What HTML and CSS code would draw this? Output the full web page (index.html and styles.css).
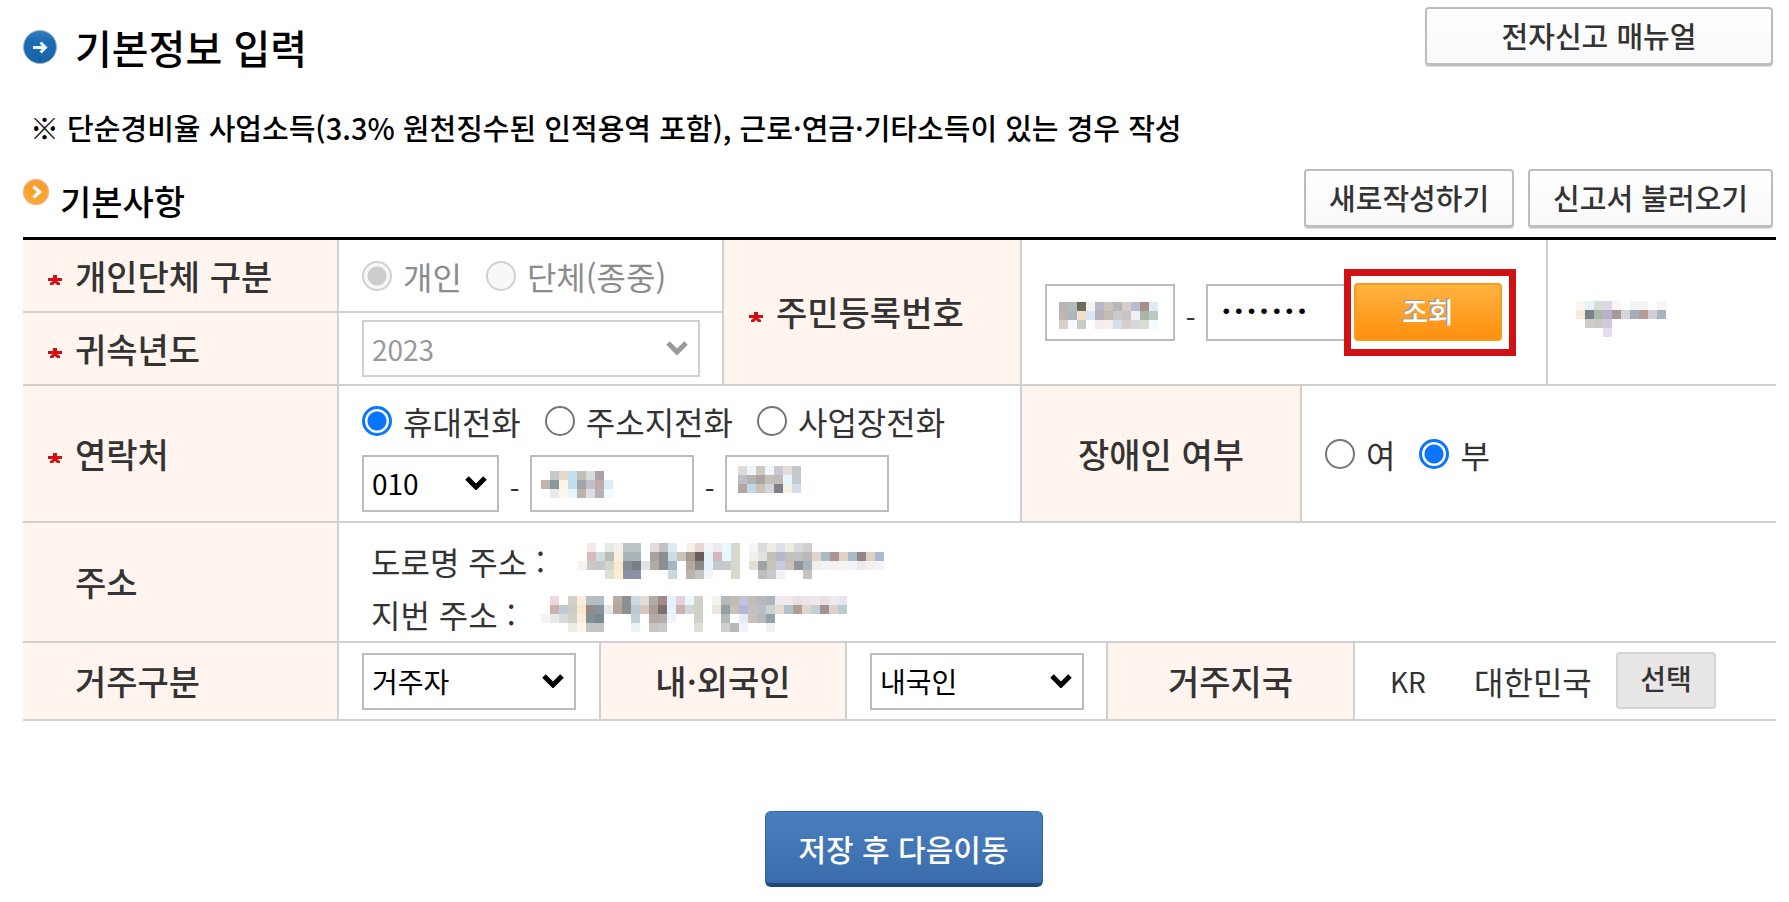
FILE: index.html
```html
<!DOCTYPE html>
<html lang="ko">
<head>
<meta charset="utf-8">
<title>기본정보 입력</title>
<link rel="stylesheet" href="styles.css">
</head>
<body>
<main class="page">
  <header class="page-head">
    <div class="title">
      <svg class="title-icon" viewBox="0 0 34 34" aria-hidden="true">
        <defs><linearGradient id="blue" x1="0" y1="0" x2="0" y2="1"><stop offset="0" stop-color="#3a7fbd"/><stop offset=".3" stop-color="#1c6cb2"/><stop offset="1" stop-color="#1a62a4"/></linearGradient></defs>
        <circle cx="17" cy="17" r="16.5" fill="url(#blue)" stroke="#8fb3d2"/>
        <path d="M10 17.500h12M17.500 12.500l5 5-5 5" fill="none" stroke="#e8f6ff" stroke-width="3"/>
      </svg>
      <h1>기본정보 입력</h1>
    </div>
    <button type="button" class="btn btn-manual">전자신고 매뉴얼</button>
  </header>

  <p class="note">※ 단순경비율 사업소득(3.3% 원천징수된 인적용역 포함), 근로·연금·기타소득이 있는 경우 작성</p>

  <div class="section-head">
    <div class="section-title">
      <svg class="section-icon" viewBox="0 0 26 26" aria-hidden="true">
        <defs><linearGradient id="orange" x1="0" y1="0" x2="0" y2="1"><stop offset="0" stop-color="#f49a2c"/><stop offset="1" stop-color="#f9ab2e"/></linearGradient></defs>
        <circle cx="13" cy="13" r="12" fill="url(#orange)" stroke="#f5a85c" stroke-width="2"/>
        <path d="M10.500 7.500l6 5.500-6 5.500" fill="none" stroke="#fff" stroke-width="3.400"/>
      </svg>
      <h2>기본사항</h2>
    </div>
    <div class="section-actions">
      <button type="button" class="btn">새로작성하기</button>
      <button type="button" class="btn">신고서 불러오기</button>
    </div>
  </div>

  <form>
    <table class="form-table">
      <colgroup>
        <col class="c1"><col class="c2"><col class="c3"><col class="c4"><col class="c5"><col class="c6"><col class="c7"><col class="c8"><col class="c9"><col class="c10">
      </colgroup>
      <tbody>
        <tr class="row-short">
          <th scope="row"><svg class="req" viewBox="0 0 14 10"><path d="M5 0h4v3h5v3H9l3 2v2H9L7 8l-2 2H2V8l3-2H0V3h5z"/></svg>개인단체 구분</th>
          <td colspan="2">
            <div class="options">
              <label class="opt off"><input type="radio" name="kind" checked disabled>개인</label>
              <label class="opt off"><input type="radio" name="kind" disabled>단체(종중)</label>
            </div>
          </td>
          <th scope="row" rowspan="2" colspan="2" class="th-rrn"><svg class="req" viewBox="0 0 14 10"><path d="M5 0h4v3h5v3H9l3 2v2H9L7 8l-2 2H2V8l3-2H0V3h5z"/></svg>주민등록번호</th>
          <td rowspan="2" colspan="4">
            <div class="rrn">
              <span class="masked"><input type="text" class="box w-front" aria-label="주민등록번호 앞자리"><svg class="mosaic over m-rrn" data-mosaic="rrn" aria-hidden="true"></svg></span>
              <span class="dash">-</span>
              <input type="password" class="box w-back" value="0000000" aria-label="주민등록번호 뒷자리">
              <span class="lookup"><button type="button" class="btn-lookup">조회</button></span>
            </div>
          </td>
          <td rowspan="2"><svg class="mosaic m-name" data-mosaic="name" aria-hidden="true"></svg></td>
        </tr>
        <tr class="row-short">
          <th scope="row"><svg class="req" viewBox="0 0 14 10"><path d="M5 0h4v3h5v3H9l3 2v2H9L7 8l-2 2H2V8l3-2H0V3h5z"/></svg><label for="year">귀속년도</label></th>
          <td colspan="2">
            <span class="select off w-year"><select id="year" disabled><option>2023</option></select><svg class="chev" viewBox="0 0 22 14"><path d="M2 2l9 9 9-9"/></svg></span>
          </td>
        </tr>
        <tr class="row-tel">
          <th scope="row"><svg class="req" viewBox="0 0 14 10"><path d="M5 0h4v3h5v3H9l3 2v2H9L7 8l-2 2H2V8l3-2H0V3h5z"/></svg>연락처</th>
          <td colspan="4">
            <div class="tel">
              <div class="options tel-kind">
                <label class="opt"><input type="radio" name="tel" checked>휴대전화</label>
                <label class="opt"><input type="radio" name="tel">주소지전화</label>
                <label class="opt"><input type="radio" name="tel">사업장전화</label>
              </div>
              <div class="tel-row">
                <span class="select w-tel"><select aria-label="전화 앞자리"><option>010</option></select><svg class="chev" viewBox="0 0 22 14"><path d="M2 2l9 9 9-9"/></svg></span>
                <span class="dash">-</span>
                <span class="masked"><input type="text" class="box w-num" aria-label="전화 가운데 자리"><svg class="mosaic over m-tel" data-mosaic="tel1" aria-hidden="true"></svg></span>
                <span class="dash">-</span>
                <span class="masked"><input type="text" class="box w-num" aria-label="전화 끝자리"><svg class="mosaic over m-tel2" data-mosaic="tel2" aria-hidden="true"></svg></span>
              </div>
            </div>
          </td>
          <th scope="row" colspan="2" class="mid">장애인 여부</th>
          <td colspan="3">
            <div class="options">
              <label class="opt"><input type="radio" name="dis">여</label>
              <label class="opt"><input type="radio" name="dis" checked>부</label>
            </div>
          </td>
        </tr>
        <tr class="row-addr">
          <th scope="row" class="plain">주소</th>
          <td colspan="9">
            <div class="addr">도로명 주소 : <svg class="mosaic m-road" data-mosaic="road" aria-hidden="true"></svg></div>
            <div class="addr">지번 주소 : <svg class="mosaic m-lot" data-mosaic="lot" aria-hidden="true"></svg></div>
          </td>
        </tr>
        <tr class="row-res">
          <th scope="row" class="plain"><label for="res">거주구분</label></th>
          <td><span class="select w-res"><select id="res"><option>거주자</option></select><svg class="chev" viewBox="0 0 22 14"><path d="M2 2l9 9 9-9"/></svg></span></td>
          <th scope="row" colspan="2" class="mid"><label for="nat">내·외국인</label></th>
          <td colspan="2"><span class="select w-res"><select id="nat"><option>내국인</option></select><svg class="chev" viewBox="0 0 22 14"><path d="M2 2l9 9 9-9"/></svg></span></td>
          <th scope="row" colspan="2" class="mid">거주지국</th>
          <td colspan="2">
            <div class="country"><span class="code">KR</span><span class="name">대한민국</span><button type="button" class="btn-pick">선택</button></div>
          </td>
        </tr>
      </tbody>
    </table>
    <div class="submit"><button type="button" class="btn-save">저장 후 다음이동</button></div>
  </form>
</main>
<script src="mosaic.js"></script>
</body>
</html>
```
FILE: styles.css
```css
* { box-sizing: border-box; }
body {
  margin: 0;
  background: #fff;
  color: #333;
  font-family: "Noto Sans CJK KR", "Noto Sans", sans-serif;
  font-size: 32px;
  line-height: 40px;
}
button, input, select { font-family: inherit; margin: 0; }
h1, h2, p { margin: 0; color: #000; font-weight: 500; }

.page { padding: 7px 13px 16px 23px; }
.page-head { display: flex; justify-content: space-between; padding-right: 3px; }
.title { display: flex; align-items: center; gap: 18px; padding-top: 20px; }
.title-icon { width: 34px; height: 34px; }
h1 { font-size: 40px; line-height: 38px; }
.note { padding: 41px 0 22px 7px; font-size: 29px; line-height: 40px; white-space: nowrap; }

.section-head { display: flex; justify-content: space-between; padding: 0 3px 9px 0; }
.section-title { display: flex; align-items: flex-start; gap: 11px; padding-top: 10px; }
.section-icon { width: 26px; height: 26px; }
h2 { font-size: 34px; line-height: 44px; }
.section-actions { display: flex; gap: 14px; }

.btn {
  height: 59px;
  padding: 0 23px 2px;
  border: 2px solid #bdbdbd;
  border-bottom-width: 3px;
  border-radius: 4px;
  background: linear-gradient(#fff, #f9f9f9);
  box-shadow: 0 1px 1px #ddd;
  color: #333;
  font-size: 29px;
  font-weight: 500;
}
.btn-manual { width: 348px; }

.form-table { width: 100%; table-layout: fixed; border-collapse: separate; border-spacing: 0; border-top: 3px solid #000; }
.c1 { width: 314px; } .c2 { width: 262px; } .c3 { width: 123px; } .c4 { width: 123px; } .c5 { width: 175px; }
.c6 { width: 86px; } .c7 { width: 194px; } .c8 { width: 53px; } .c9 { width: 193px; } .c10 { width: 230px; }
th, td { border-bottom: 2px solid #d0d0d0; border-left: 2px solid #d0d0d0; vertical-align: middle; }
th { padding: 0; background: #fff5ee; color: #333; font-size: 34px; font-weight: 500; text-align: left; }
th:first-child { border-left: 0; padding-left: 25px; }
td { padding: 0 0 0 23px; }
.th-rrn { padding-left: 25px; }
th.mid { text-align: center; }
th.plain:first-child { padding-left: 52px; }
.row-short { height: 73px; }
.row-tel { height: 137px; }
.row-addr { height: 120px; }
.row-res { height: 78px; }
.req { width: 14px; height: 10px; margin-right: 13px; fill: #d40f14; vertical-align: middle; }

.options { display: flex; gap: 24px; }
.opt { display: flex; align-items: center; gap: 11px; white-space: nowrap; }
.opt.off { color: #8c8c8c; }
input[type="radio"] {
  appearance: none;
  width: 30px;
  height: 30px;
  border: 2px solid #767676;
  border-radius: 50%;
  background: #fff;
}
input[type="radio"]:checked { border: 3px solid #0a75ff; background: radial-gradient(circle, #0a75ff 9px, #fff 10px); }
input[type="radio"]:disabled { border: 2px solid #d0d0d0; background: #f8f8f8; }
input[type="radio"]:disabled:checked { background: radial-gradient(circle, #cdcdcd 9px, #f8f8f8 10px); }

.box, select {
  height: 57px;
  border: 2px solid #bcbcbc;
  border-radius: 0;
  background: #fff;
  color: #000;
  font-size: 28px;
}
.box { padding: 0 12px; }
.select { display: inline-block; position: relative; vertical-align: middle; }
select { appearance: none; width: 100%; padding: 0 8px; display: block; }
.chev { position: absolute; right: 12px; top: 21px; width: 22px; height: 14px; fill: none; stroke: #000; stroke-width: 5; pointer-events: none; }
.select.off select { border-color: #d0d0d0; color: #999; opacity: 1; }
.select.off .chev { stroke: #999; }
.w-year { width: 338px; }
.w-tel { width: 137px; }
.w-num { width: 164px; }
.w-res { width: 214px; }
.w-front { width: 130px; }
.w-back { width: 146px; font-family: "Liberation Mono", monospace; font-size: 21px; }
.dash { flex: none; width: 31px; padding-top: 12px; text-align: center; font-size: 28px; }

.tel { padding-top: 5px; }
.tel-kind { padding-bottom: 14px; }
.tel-row, .rrn { display: flex; align-items: center; }
.masked { display: flex; position: relative; }
.mosaic { display: block; }
.mosaic.over { position: absolute; pointer-events: none; }
.m-rrn { left: 14px; top: 18px; }
.m-tel { left: 11px; top: 16px; }
.m-tel2 { left: 13px; top: 11px; }
.m-name { margin: 14px 0 0 5px; }
.lookup { position: relative; display: flex; }
.lookup::before { content: ""; position: absolute; inset: -14px -14px -15px -8px; border: 7px solid #d01215; background: #fff; }
.btn-lookup {
  position: relative;
  width: 148px;
  height: 58px;
  margin-left: 2px;
  padding: 0 0 2px;
  border: 2px solid #f99a1c;
  border-radius: 4px;
  background: linear-gradient(#ffb340, #ff8f0e);
  color: #fff;
  font-size: 28px;
  font-weight: 500;
  text-shadow: -2px -1px 0 #9a9a9a;
}
.addr { display: flex; align-items: center; height: 53px; padding: 10px 0 0 9px; white-space: pre; }
.addr .m-road { margin-left: 24px; }
.addr .m-lot { margin-left: 16px; }
.country { display: flex; align-items: center; }
.code { width: 84px; padding-left: 12px; font-size: 28px; }
.name { width: 154px; padding-left: 12px; white-space: nowrap; }
.btn-pick { width: 100px; height: 57px; margin: 0 0 2px; padding: 0 0 4px; border: 2px solid #d3d3d3; border-radius: 4px; background: #e8e6e6; color: #333; font-size: 28px; font-weight: 500; }

.submit { display: flex; justify-content: center; padding: 90px 0 0 8px; }
.btn-save {
  width: 278px;
  height: 76px;
  border: 1px solid #2f65a3;
  border-bottom: 4px solid #1f4878;
  border-radius: 6px;
  background: linear-gradient(#4a7fbf, #3a6cab);
  color: #fff;
  font-size: 30px;
  font-weight: 500;
  white-space: nowrap;
}
```
FILE: mosaic.js
```js
// Privacy mosaics: each row lists the block colours, "-" is an empty block.
const CELL = 9;
const mosaics = {
  rrn: [
    "bab5b3 b5bbbb 6b6c60 f2f2ef bab7c8 cdc3bf b5b7ba d9cdcb b9bace a88e8a dcebf5",
    "bfb5b5 aeb4c2 f3dfc6 d5e7f8 b9b2bd c4bab6 c8cccc c9c3c3 f0f0f5 aab6a9 bfc9bd",
    "d6cfca f5faff c8cdc5 - f5ecee f6eeea d5dfe8 d7cdcb d6d9db d6ddd3 f5faff"],
  name: [
    "fdf7f1 e8f3f8 d5dfd8 ded6e5 f7f7f7 - f4f4f4 f4f4f4 - f5f5f3",
    "fbe9d8 75838b a8b9ac bbb0cc a8979a d5d5da a5acbb b49d9b cdcfd4 aab3c2",
    "- d0cdc8 c9cbc2 d2c8df - - - - - -",
    "- - - e5dded - - - - - -"],
  tel1: [
    "- c4c8c6 e4d9cc c5e0f0 bfc0b5 d9dbdb ada0ad -",
    "bfb4ae 84999a fdf3e2 bfdeef a0a5ab bfc0c8 c3aaa8 d9edfb",
    "- e8e9e8 fbf7ee e8f5fc bdb2ae dcdde2 b6b2b5 f3faff"],
  tel2: [
    "ded9d6 edf5fc cdc8c1 f0f6fb cbc7d3 e5dbdb c3c9cc",
    "c0bdc9 b5b3b3 aaa5a0 c4bfb9 c1bcb9 e4f6fb c3cbcd",
    "b3a8a0 c8d6e4 c8c3b8 d3d7dc 827f8b f5f2df d2dced"],
  road: [
    "- f3ebe9 - e3ebe5 f6f1e8 bcc4c6 bcc4c6 - e3dcdb c2c2c2 dceaf2 - f3f3ee ead7d3 eef6fc f0e8ee e9f8fd d6d8cc - f7f5f2 d9dbda efede4 dddee8 f0eae4 d8dadb cfcfcf - - - - - - - -",
    "- d9b9bb d0dcdf b8beb5 fbeed8 a6b4bb a6b4bb - a8a19c 8e8e8e cddbe4 cbc2b8 a8988e 6a5e5c e3f2fb d8b6bd e9f8fd d6d8cc - f3f0ea dfe3e1 c8bfb4 b6b8d2 c3bfbb bfc1c3 b9b9b9 ddd7ca a6bac6 a89494 e0d4c6 a9bcca 958587 dfd0c4 a9b9d0",
    "f8f1ec c9c9c9 c4c8cc d2d4cc f8e9cf 858c94 747f88 dfe3e5 b3aaa3 8e8e8e a2b7c1 - b3a9a1 8f8885 e3f2fb c3c8cc c6c8cb d6d8cc - e3ddd6 9ea6a5 c4c4bb c9c9e0 c9c2b8 90969c a9b3b8 f0f0ea f3f3f3 f5efef f5f5f5 f3f3f5 efe7e8 f5f0ee f3f3f6",
    "- - - dcdfd2 fbecd0 8d90a0 8d90a0 - - - ccd8dc - bbb3ad c3c3c3 f2f6fb - - d6d8cc - - bbbebf c9c9c9 f1f1f8 - - c3c3c3 - - - - - - - -"],
  lot: [
    "- ecd8df - d0d2c6 faeddc b4bfc3 b4bfc3 - b9aaa2 8e9090 cbd9e3 e2ddd8 b3aaa4 9d8c87 e3f2fb e8cfda e9f8fd d0d2c6 - f5f1ec b5b9b9 c4bcb2 c3c3e0 c4bcb2 b6b9bd adb6ba eeeaee f2e9ed eadfe6 ebe5ea f2e6ea e8dee6 f0e9ef e8e5ee",
    "- c9b3ac bfc9cf cdcfc4 f9e7cc 97888a 84959c e8e8e8 b3a69e 8e9090 b9ccd6 d5c8bc ac9e96 7d706d e3f2fb ccb3ac d4d8dc d0d2c6 - ebe6df 95a0a2 c7c0b6 b5b5d8 c2c0bc b9bfc6 cdd4d8 e4dccf b3c3ca b09d96 dfd5c9 c2d0d6 a2918e dcd2c7 bbcbd2",
    "f9f3ef e8e8e8 dadada d0d2c6 fbeedb 858f94 788990 - - - c3cfd6 - b3aaa4 b5adab eef6fc - - d0d2c6 - - b5b9b9 - e9e9f4 c9c2b8 b6b9bd 91a1a6 - - - - - - - -",
    "- - - ecede7 fdf5e8 c3c3c3 c3c3c3 - - - ecf1f4 - c9c3bd c9c9c9 - - - dfe1d8 - - d0d0d0 b9b9b9 f1f1f8 - - f0f0f0 - - - - - - - -"]
};
document.querySelectorAll("[data-mosaic]").forEach(svg => {
  const rows = mosaics[svg.dataset.mosaic].map(r => r.split(" "));
  svg.setAttribute("width", rows[0].length * CELL);
  svg.setAttribute("height", rows.length * CELL);
  rows.forEach((row, y) => row.forEach((color, x) => {
    if (color === "-") return;
    const rect = document.createElementNS("http://www.w3.org/2000/svg", "rect");
    rect.setAttribute("x", x * CELL);
    rect.setAttribute("y", y * CELL);
    rect.setAttribute("width", CELL);
    rect.setAttribute("height", CELL);
    rect.setAttribute("fill", "#" + color);
    svg.appendChild(rect);
  }));
});
```
